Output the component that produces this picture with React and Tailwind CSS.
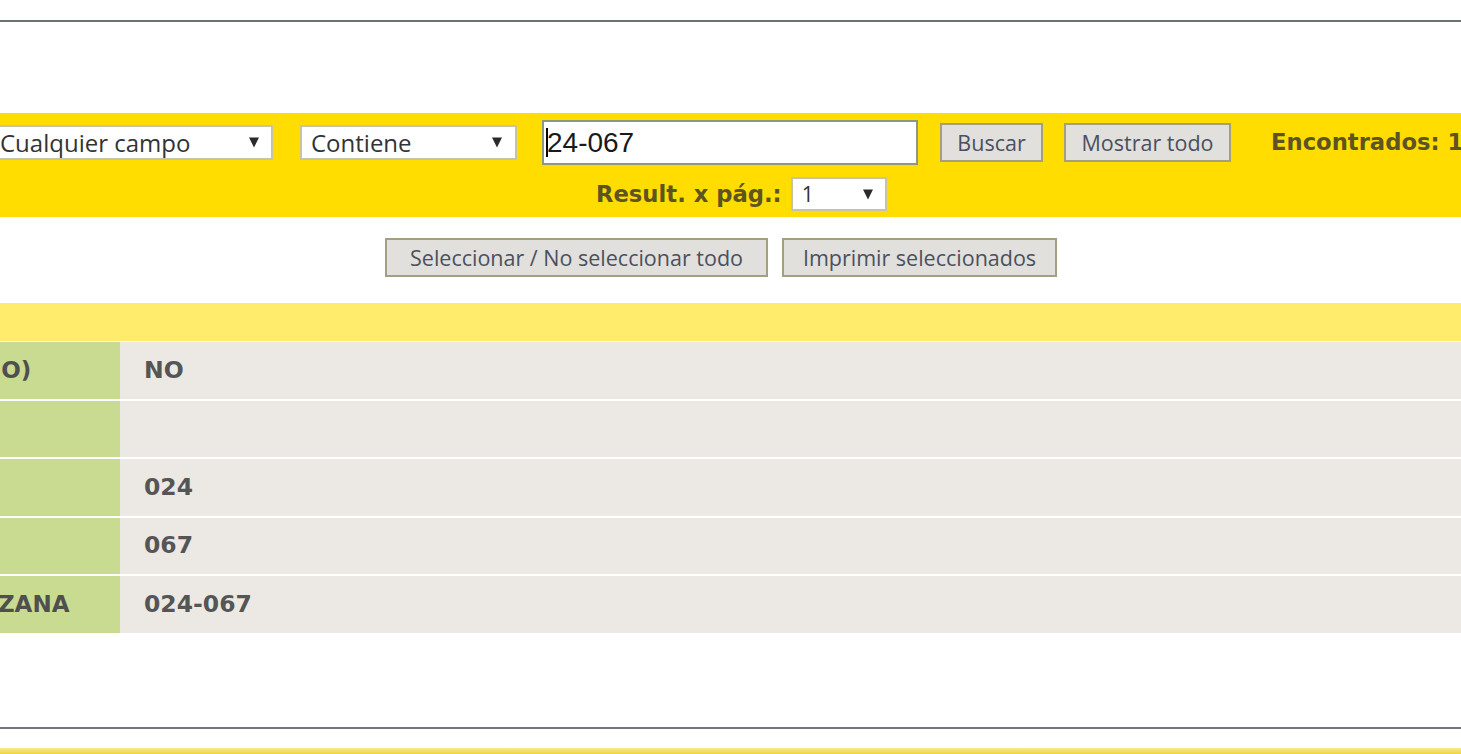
import React from "react";

const bold = { fontFamily: '"DejaVu Sans", Verdana, sans-serif' };
const ui = { fontFamily: '"Open Sans", Tahoma, sans-serif' };

function Arrow() {
  return (
    <svg width="10" height="11" viewBox="0 0 10 11" className="shrink-0">
      <path d="M0 0.5 L10 0.5 L5 10.5 Z" fill="#2b2b2b" />
    </svg>
  );
}

function FakeSelect({ label, className, arrowPad = "pr-[14px]", textClass = "text-[24px]" }) {
  return (
    <div
      className={`shrink-0 flex items-center justify-between bg-white border-2 border-[#c8c3a6] pl-[9px] ${arrowPad} ${className}`}
    >
      <span className={`${textClass} text-[#333] leading-none`} style={ui}>
        {label}
      </span>
      <Arrow />
    </div>
  );
}

function Btn({ children, className = "" }) {
  return (
    <button
      className={`shrink-0 h-[39px] bg-[#e1e0dc] border-2 border-[#a59f82] text-[21.5px] text-[#4b505e] leading-none ${className}`}
      style={ui}
    >
      {children}
    </button>
  );
}

const rows = [
  { label: "(SI/NO)", value: "NO" },
  { label: "", value: "" },
  { label: "", value: "024" },
  { label: "", value: "067" },
  { label: "MANZANA", value: "024-067" },
];

export default function App() {
  return (
    <div className="w-full h-[754px] overflow-hidden bg-white flex flex-col">
      <div className="h-[20px] shrink-0" />
      <div className="h-[2px] bg-[#6b7073] shrink-0" />
      <div className="h-[91px] shrink-0" />

      {/* search band */}
      <div className="h-[104px] bg-[#ffdd00] shrink-0 flex flex-col">
        <div className="flex items-center pt-[7px]">
          <FakeSelect label="Cualquier campo" className="-ml-[11px] w-[284px] h-[35px]" arrowPad="pr-[12px]" />
          <FakeSelect label="Contiene" className="ml-[27px] w-[217px] h-[35px]" arrowPad="pr-[13px]" />
          <div className="shrink-0 ml-[25px] w-[376px] h-[45px] bg-white border-2 border-[#8d9883] flex items-center pl-[2px]">
            <span className="w-[2px] h-[29px] bg-black" />
            <span className="text-[28px] text-[#1a1a1a] leading-none -ml-[1px]" style={{ fontFamily: '"Liberation Sans", Arial, sans-serif' }}>
              24-067
            </span>
          </div>
          <Btn className="ml-[22px] w-[103px]">Buscar</Btn>
          <Btn className="ml-[21px] w-[167px]">Mostrar todo</Btn>
          <span className="shrink-0 ml-[40px] text-[22.7px] font-bold text-[#5e5322] whitespace-nowrap" style={bold}>
            Encontrados: 1
          </span>
        </div>
        <div className="flex items-center pl-[596px] mt-[12px]">
          <span className="text-[22.7px] font-bold text-[#5e5322] whitespace-nowrap" style={bold}>
            Result. x pág.:
          </span>
          <FakeSelect
            label="1"
            className="ml-[9px] w-[96px] h-[34px]"
            arrowPad="pr-[12px]"
            textClass="text-[21px]"
          />
        </div>
      </div>

      {/* action buttons */}
      <div className="h-[86px] shrink-0 flex items-start pt-[21px] pl-[385px]">
        <Btn className="w-[383px]">Seleccionar / No seleccionar todo</Btn>
        <Btn className="ml-[14px] w-[275px]">Imprimir seleccionados</Btn>
      </div>

      {/* header band */}
      <div className="h-[38px] bg-[#ffeb6c] shrink-0" />

      {/* record table */}
      <div className="flex flex-col gap-[2px] pt-[1px] -ml-[84px] shrink-0">
        {rows.map((r, i) => (
          <div key={i} className="flex h-[56.5px]">
            <div className="w-[204px] shrink-0 bg-[#c9db90] flex items-center pl-[22px]">
              <span className="text-[23px] font-bold text-[#4f4f4f] whitespace-nowrap" style={bold}>
                {r.label}
              </span>
            </div>
            <div className="flex-1 bg-[#ece9e4] flex items-center pl-[24px]">
              <span className="text-[23.5px] font-bold text-[#555] whitespace-nowrap" style={bold}>
                {r.value}
              </span>
            </div>
          </div>
        ))}
      </div>

      <div className="h-[94px] shrink-0" />
      <div className="h-[2px] bg-[#74747e] shrink-0" />
      <div className="h-[19px] shrink-0" />
      <div className="flex-1 bg-gradient-to-b from-[#fbe98a] to-[#ecd43a]" />
    </div>
  );
}
